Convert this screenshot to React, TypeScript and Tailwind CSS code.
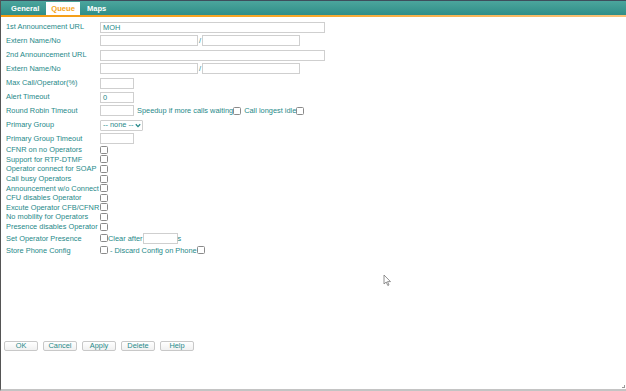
import React from "react";

const label = "text-[#268989]";

function Box({ w, value }: { w: number; value?: string }) {
  return (
    <div
      className="h-[11px] border border-[#cfcfcf] bg-white px-[2px] text-[7.4px] leading-[9px] text-[#268989]"
      style={{ width: w }}
    >
      {value}
    </div>
  );
}

function Check() {
  return <span className="inline-block w-[8px] h-[8px] border border-[#8a8a8a] rounded-[1.5px] bg-white shrink-0" />;
}

function Row({ name, h = 14, children }: { name: string; h?: number; children?: React.ReactNode }) {
  return (
    <div className="flex items-center" style={{ height: h }}>
      <div className={`w-[94px] shrink-0 whitespace-nowrap ${label}`}>{name}</div>
      <div className="flex items-center">{children}</div>
    </div>
  );
}

function Tab({ name, active }: { name: string; active?: boolean }) {
  return (
    <div
      className={
        active
          ? "h-[13px] px-[5px] bg-white text-[#f5a41c] font-bold flex items-center"
          : "h-[13px] px-[5px] text-white font-bold flex items-center"
      }
    >
      {name}
    </div>
  );
}

const checks = [
  "CFNR on no Operators",
  "Support for RTP-DTMF",
  "Operator connect for SOAP",
  "Call busy Operators",
  "Announcement w/o Connect",
  "CFU disables Operator",
  "Excute Operator CFB/CFNR",
  "No mobility for Operators",
  "Presence disables Operator",
];

export default function App() {
  return (
    <div
      className="relative w-[626px] h-[391px] bg-white border-l border-l-[#555] border-b-2 border-b-[#c4c4c4] overflow-hidden text-[7.4px]"
      style={{ fontFamily: '"Liberation Sans", Arial, sans-serif' }}
    >
      <div className="h-[1px] bg-[#3e4d5c]" />
      <div className="h-[14px] bg-gradient-to-b from-[#4ba59d] to-[#2f8e88] flex items-end pl-[5px] gap-[2px] text-[7.6px]">
        <Tab name="General" />
        <Tab name="Queue" active />
        <Tab name="Maps" />
      </div>
      <div className="h-[2px] bg-gradient-to-r from-[#f49c12] via-[#f7a82a] to-[#f9c27a]" />

      <div className="pl-[5px] pt-[3px]">
        <Row name="1st Announcement URL"><Box w={225} value="MOH" /></Row>
        <Row name="Extern Name/No">
          <Box w={98} />
          <span className={`px-[1px] ${label}`}>/</span>
          <Box w={98} />
        </Row>
        <Row name="2nd Announcement URL"><Box w={225} /></Row>
        <Row name="Extern Name/No">
          <Box w={98} />
          <span className={`px-[1px] ${label}`}>/</span>
          <Box w={98} />
        </Row>
        <Row name="Max Call/Operator(%)"><Box w={34} /></Row>
        <Row name="Alert Timeout"><Box w={34} value="0" /></Row>
        <Row name="Round Robin Timeout">
          <Box w={34} />
          <span className={`ml-[3px] whitespace-nowrap ${label}`}>Speedup if more calls waiting</span>
          <Check />
          <span className={`ml-[3px] whitespace-nowrap ${label}`}>Call longest idle</span>
          <Check />
        </Row>
        <Row name="Primary Group">
          <div className={`h-[11px] w-[43px] border border-[#cfcfcf] rounded-[1px] flex items-center pl-[2px] gap-[2px] ${label}`}>
            <span>-- none --</span>
            <svg width="6" height="5" viewBox="0 0 6 5">
              <path d="M0.8 1.2 L3 3.6 L5.2 1.2" fill="none" stroke="#268989" strokeWidth="1.3" />
            </svg>
          </div>
        </Row>
        <Row name="Primary Group Timeout" h={13}><Box w={34} /></Row>
        {checks.map((c) => (
          <Row key={c} name={c} h={9.6}><Check /></Row>
        ))}
        <div className="h-[1px]" />
        <Row name="Set Operator Presence" h={12}>
          <Check />
          <span className={`whitespace-nowrap ${label}`}>Clear after</span>
          <Box w={35} />
          <span className={label}>s</span>
        </Row>
        <Row name="Store Phone Config" h={12}>
          <Check />
          <span className={`ml-[2px] whitespace-nowrap ${label}`}>- Discard Config on Phone</span>
          <Check />
        </Row>
      </div>

      <div className="flex gap-[5px] pl-[3px] mt-[85px]">
        {["OK", "Cancel", "Apply", "Delete", "Help"].map((b) => (
          <button
            key={b}
            className={`w-[34px] h-[10px] border border-[#c8c8c8] rounded-[2px] bg-gradient-to-b from-white to-[#f1f1f1] text-[7.4px] leading-[8px] ${label}`}
          >
            {b}
          </button>
        ))}
      </div>

      <svg className="absolute left-[382px] top-[274px]" width="9" height="13" viewBox="0 0 9 13">
        <path d="M1 1 L1 10 L3.2 8 L4.8 11.5 L6 11 L4.5 7.6 L7.5 7.6 Z" fill="white" stroke="#777" strokeWidth="0.8" />
      </svg>
      <div className="absolute right-[1px] bottom-[1px] w-[3px] h-[3px] border-r border-b border-[#999]" />
    </div>
  );
}
